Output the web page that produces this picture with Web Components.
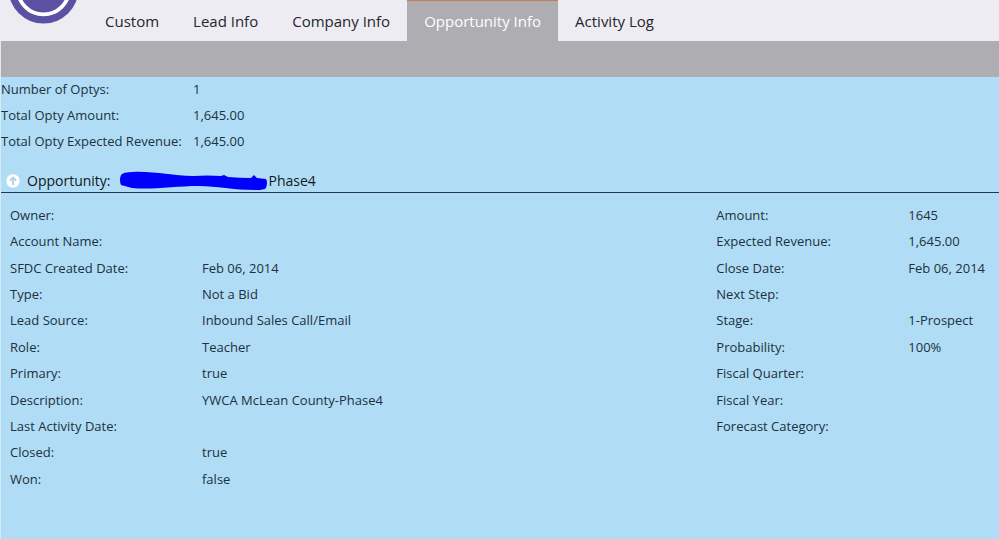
<!DOCTYPE html>
<html lang="en">
<head>
<meta charset="utf-8">
<meta name="viewport" content="width=device-width, initial-scale=1">
<title>Opportunity Info</title>
<style>
  body {
    margin: 0;
    font: 13px/18px "Open Sans", "Noto Sans", sans-serif;
    color: #203040;
  }
</style>
</head>
<body>
<lead-page>
  <tab-bar slot="header">
    <tab-link href="#custom">Custom</tab-link>
    <tab-link href="#lead">Lead Info</tab-link>
    <tab-link href="#company">Company Info</tab-link>
    <tab-link href="#opportunity" active>Opportunity Info</tab-link>
    <tab-link href="#activity">Activity Log</tab-link>
  </tab-bar>

  <field-list>
    <info-field label="Number of Optys:">1</info-field>
    <info-field label="Total Opty Amount:">1,645.00</info-field>
    <info-field label="Total Opty Expected Revenue:">1,645.00</info-field>
  </field-list>

  <opportunity-section label="Opportunity:">
    <span slot="name">Phase4</span>
    <field-list rows="11">
      <info-field label="Owner:"></info-field>
      <info-field label="Account Name:"></info-field>
      <info-field label="SFDC Created Date:">Feb 06, 2014</info-field>
      <info-field label="Type:">Not a Bid</info-field>
      <info-field label="Lead Source:">Inbound Sales Call/Email</info-field>
      <info-field label="Role:">Teacher</info-field>
      <info-field label="Primary:">true</info-field>
      <info-field label="Description:">YWCA McLean County-Phase4</info-field>
      <info-field label="Last Activity Date:"></info-field>
      <info-field label="Closed:">true</info-field>
      <info-field label="Won:">false</info-field>
    </field-list>
    <field-list rows="11">
      <info-field label="Amount:">1645</info-field>
      <info-field label="Expected Revenue:">1,645.00</info-field>
      <info-field label="Close Date:">Feb 06, 2014</info-field>
      <info-field label="Next Step:"></info-field>
      <info-field label="Stage:">1-Prospect</info-field>
      <info-field label="Probability:">100%</info-field>
      <info-field label="Fiscal Quarter:"></info-field>
      <info-field label="Fiscal Year:"></info-field>
      <info-field label="Forecast Category:"></info-field>
    </field-list>
  </opportunity-section>
</lead-page>

<script>
function define(name, html, setup) {
  const template = document.createElement("template");
  template.innerHTML = html;

  customElements.define(name, class extends HTMLElement {
    constructor() {
      super();
      this.attachShadow({ mode: "open" });
      this.shadowRoot.append(template.content.cloneNode(true));
    }

    connectedCallback() {
      setup?.(this, this.shadowRoot);
    }
  });
}

define("lead-page", `
  <style>
    :host {
      display: flex;
      flex-direction: column;
      min-height: 100vh;
      background: #b0ddf5;
    }
    .toolbar {
      height: 36px;
      border-left: 1px solid #e6e6ec;
      background: #aeadb2;
    }
    main {
      flex: 1;
      border-left: 1px solid #d4ecf9;
    }
  </style>
  <slot name="header"></slot>
  <div class="toolbar"></div>
  <main><slot></slot></main>
`);

define("tab-bar", `
  <style>
    :host {
      display: flex;
      align-items: flex-start;
      padding-left: 8px;
      background: #ececf2;
    }
    svg {
      flex: none;
      margin-right: 9px;
    }
    nav {
      display: flex;
    }
  </style>
  <svg width="71" height="24" viewBox="0 0 71 24" role="img" aria-label="Home">
    <circle cx="35.5" cy="-11.4" r="35" fill="#5a51a2"/>
    <circle cx="35.5" cy="-11.4" r="25.8" fill="none" stroke="#fff" stroke-width="3.8"/>
  </svg>
  <nav><slot></slot></nav>
`);

define("tab-link", `
  <style>
    :host {
      display: block;
    }
    a {
      display: block;
      padding: 9px 17px 8px;
      border-top: 1px solid transparent;
      font-size: 15px;
      line-height: 23px;
      color: #26262c;
      text-decoration: none;
      white-space: nowrap;
    }
    :host([active]) a {
      border-top-color: #c47f58;
      background: #aeadb2;
      color: #fff;
    }
  </style>
  <a><slot></slot></a>
`, (host, root) => {
  const link = root.querySelector("a");
  link.href = host.getAttribute("href");
  if (host.hasAttribute("active")) link.setAttribute("aria-current", "page");
});

define("field-list", `
  <style>
    :host {
      display: grid;
      grid-auto-rows: 1fr;
      align-content: start;
    }
    :host([rows="11"]) {
      grid-template-rows: repeat(11, 1fr);
      min-height: 290px;
    }
  </style>
  <slot></slot>
`);

define("info-field", `
  <style>
    :host {
      display: block;
    }
    dl {
      display: grid;
      grid-template-columns: 192px 1fr;
      margin: 0;
      padding: 3px 0 5px;
    }
    dd {
      margin: 0;
    }
  </style>
  <dl><dt></dt><dd><slot></slot></dd></dl>
`, (host, root) => {
  root.querySelector("dt").textContent = host.getAttribute("label");
});

define("opportunity-section", `
  <style>
    :host {
      display: block;
    }
    header {
      display: flex;
      align-items: center;
      padding: 15px 0 0 4px;
      border-bottom: 1px solid #203a4c;
    }
    button {
      width: 16px;
      height: 16px;
      margin-right: 6px;
      padding: 0;
      border: 0;
      background: none;
      cursor: pointer;
    }
    svg {
      display: block;
    }
    h2 {
      display: flex;
      align-items: center;
      margin: 0;
      font-size: 14px;
      font-weight: 400;
      line-height: 22px;
      color: #101820;
    }
    .mark {
      margin: 0 2px 0 9px;
    }
    .body {
      display: flex;
      justify-content: space-between;
      gap: 16px;
      padding: 10px 14px 16px 9px;
    }
    .body[hidden] {
      display: none;
    }
  </style>
  <header>
    <button type="button" aria-label="Toggle opportunity" aria-expanded="true">
      <svg width="16" height="16" viewBox="0 0 16 16">
        <circle cx="8" cy="8" r="6.7" fill="#fff"/>
        <path d="M8 12V5M4.8 7.8 8 4.6l3.2 3.2" fill="none" stroke="#b5d3e4" stroke-width="2"/>
      </svg>
    </button>
    <h2>
      <span class="label"></span>
      <svg class="mark" width="147" height="20" viewBox="0 0 147 20" aria-hidden="true">
        <path d="M1 4Q3 1 13 1C34 0 52 5 73 5Q88 4 101 5L104 4 108 6Q120 7 131 7L134 4 137 7 146 8Q148 11 146 17Q144 19 136 19C112 19 97 15 79 15C55 15 31 19 12 17L1 14Q-1 9 1 4Z" fill="#0000fe"/>
      </svg>
      <slot name="name"></slot>
    </h2>
  </header>
  <div class="body"><slot></slot></div>
`, (host, root) => {
  const button = root.querySelector("button");
  const body = root.querySelector(".body");
  root.querySelector(".label").textContent = host.getAttribute("label");
  button.onclick = () => {
    body.hidden = !body.hidden;
    button.setAttribute("aria-expanded", String(!body.hidden));
  };
});
</script>
</body>
</html>
